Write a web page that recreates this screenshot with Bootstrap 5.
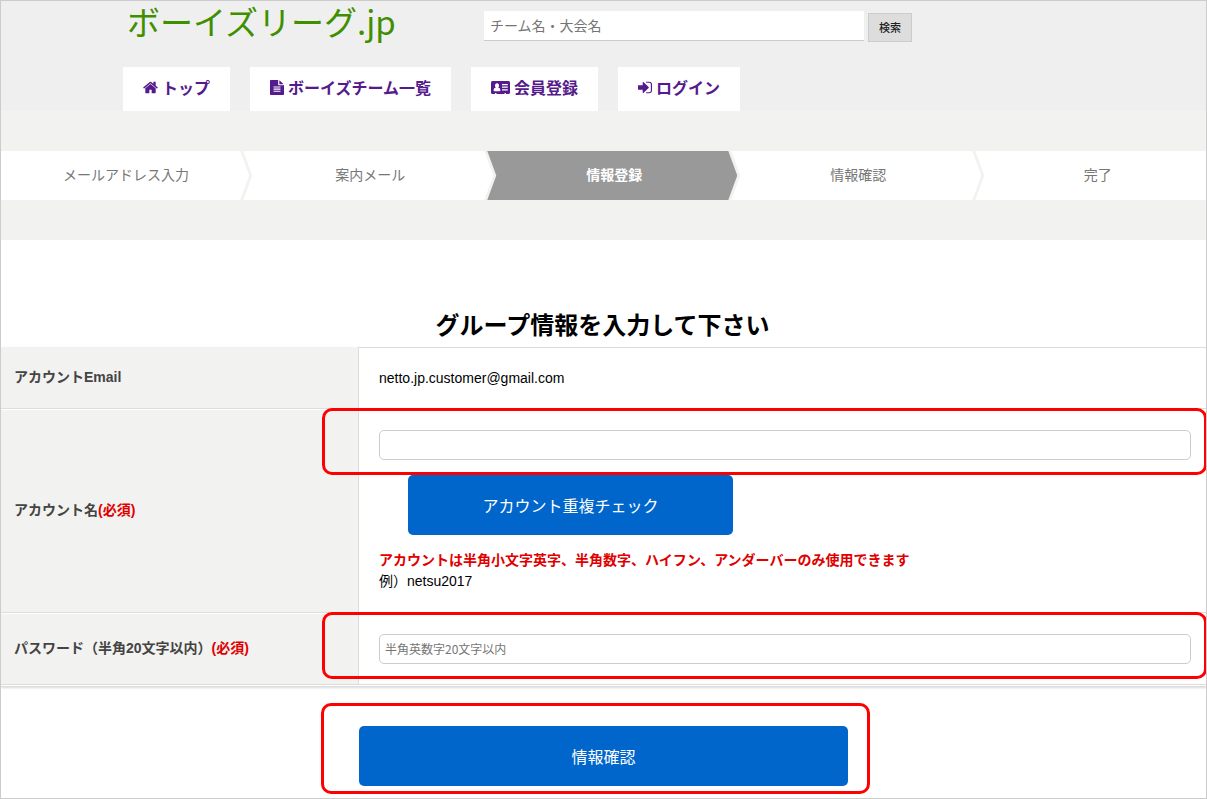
<!DOCTYPE html>
<html lang="ja">
<head>
<meta charset="utf-8">
<meta name="viewport" content="width=device-width, initial-scale=1">
<title>ボーイズリーグ.jp</title>
<link rel="stylesheet" href="https://cdn.jsdelivr.net/npm/bootstrap@5.3.0/dist/css/bootstrap.min.css">
<style>
  :root { --line: #ddd; --frame: #ccc; --pale: #f2f2f0; --alert: #e00000; --action: #0066cc; }
  body { font: 14px/20px "Liberation Sans", "Noto Sans CJK JP", sans-serif; color: #000; border: 1px solid var(--frame); }
  .site-header { background: #efefef; }
  .site-inner { max-width: 961px; }
  .topbar { height: 66px; }
  .brand { flex: 0 0 361px; padding-left: 4px; font: 33px/40px "Noto Sans CJK JP", sans-serif; color: #3f8f00; text-decoration: none; }
  .search-box { width: 380px; height: 30px; margin-top: 10px; padding: 0 6px 2px; border: 0; border-bottom: 1px solid var(--frame); border-radius: 0; font: 14px/20px "Noto Sans CJK JP", sans-serif; }
  .search-box::placeholder, .field::placeholder { color: #757575; }
  .search-btn { width: 44px; height: 29px; margin-top: 12px; padding: 0 0 2px; border: 1px solid var(--frame); border-radius: 0; background: #ddd; font: 500 11px/20px "Noto Sans CJK JP", sans-serif; color: #222; }
  .menu { gap: 20px; }
  .menu a { display: flex; align-items: center; gap: 4px; padding: 8px 20px 12px; background: #fff; color: #551a8b; font: bold 16px/24px "Noto Sans CJK JP", sans-serif; text-decoration: none; }
  .menu svg { height: 15px; fill: currentColor; }
  .progress-band { background: var(--pale); padding: 40px 0; }
  .step { flex: 0 0 auto; width: 20.75%; margin-left: -6px; padding-left: 4px; background: #fff; color: #777; text-align: center; line-height: 49px;
    clip-path: polygon(0 0, calc(100% - 9px) 0, 100% 50%, calc(100% - 9px) 100%, 0 100%, 9px 50%); }
  .step:first-child { width: 20.6%; margin-left: 0; padding-left: 2px; clip-path: polygon(0 0, calc(100% - 9px) 0, 100% 50%, calc(100% - 9px) 100%, 0 100%); }
  .step:last-child { flex: 1 1 0; width: auto; padding-left: 14px; clip-path: polygon(0 0, 100% 0, 100% 100%, 0 100%, 9px 50%); }
  .step.current { background: #999; color: #fff; font-weight: bold; }
  .page-title { margin: 0; padding: 66px 2px 5px 0; font: bold 24px/36px "Noto Sans CJK JP", sans-serif; }
  .entry { border-collapse: separate; border-spacing: 0; }
  .entry-wrap { padding-bottom: 1px; border-bottom: 1px solid var(--line); box-shadow: 0 1px 2px rgba(0,0,0,.15); }
  .entry th, .entry td { border-top: 1px solid #fff; border-bottom: 1px solid var(--line); }
  .entry th { width: 357px; padding: 0 13px 2px; background: var(--pale); color: #444; vertical-align: middle; }
  .entry td { position: relative; padding: 20px 15px 20px 20px; border-left: 1px solid var(--line); }
  .entry tr:first-child th { border-top-color: var(--pale); }
  .entry tr:first-child td { border-top-color: var(--line); }
  .required-mark, .rule { color: var(--alert); font-weight: bold; }
  .field { height: 30px; padding: 0 5px 2px; border: 1px solid var(--frame); border-radius: 5px; font: 12px/20px "Noto Sans CJK JP", sans-serif; }
  .action { height: 60px; border: 0; border-radius: 5px; background: var(--action); color: #fff; font: 16px/24px "Noto Sans CJK JP", sans-serif; }
  .check { width: 40%; margin: 15px 0 15px 29px; }
  .note { line-height: 21px; }
  .submit-area { width: 489px; max-width: 90%; margin: 39px auto 12px; position: relative; }
  /* red guide frames laid over the fields to fill in */
  .guide::after { content: ""; position: absolute; border: 3px solid #f00; border-radius: 10px; pointer-events: none; }
  td.guide::after { left: -37px; right: -1px; top: -2px; height: 67px; }
  .submit-area::after { inset: -23px -22px -8px -38px; }
</style>
</head>
<body>
<header class="site-header">
  <div class="site-inner mx-auto">
    <div class="topbar d-flex align-items-start">
      <a class="brand" href="#">ボーイズリーグ.jp</a>
      <form class="d-flex align-items-start gap-1">
        <input class="search-box form-control" type="search" aria-label="チーム名・大会名" placeholder="チーム名・大会名">
        <button class="search-btn btn" type="submit">検索</button>
      </form>
    </div>
    <nav class="menu d-flex flex-wrap">
      <a href="#"><svg width="15" viewBox="64 128 1664 1536" aria-hidden="true"><path d="M1472 992v480q0 26-19 45t-45 19h-384v-384h-256v384h-384q-26 0-45-19t-19-45v-480q0-1 .5-3t.5-3l575-474 575 474q1 2 1 6zm223-69l-62 74q-8 9-21 11h-3q-13 0-21-7l-692-577-692 577q-12 8-24 7-13-2-21-11l-62-74q-8-10-7-23.5t11-21.5l719-599q32-26 76-26t76 26l244 204v-195q0-14 9-23t23-9h192q14 0 23 9t9 23v408l219 182q10 8 11 21.5t-7 23.5z"/></svg>トップ</a>
      <a href="#"><svg width="14" viewBox="128 0 1536 1792" preserveAspectRatio="none" aria-hidden="true"><path d="M1596 476q14 14 28 36h-472v-472q22 14 36 28zm-476 164h544v1056q0 40-28 68t-68 28h-1344q-40 0-68-28t-28-68v-1600q0-40 28-68t68-28h800v544q0 40 28 68t68 28zm160 736v-64q0-14-9-23t-23-9h-704q-14 0-23 9t-9 23v64q0 14 9 23t23 9h704q14 0 23-9t9-23zm0-256v-64q0-14-9-23t-23-9h-704q-14 0-23 9t-9 23v64q0 14 9 23t23 9h704q14 0 23-9t9-23zm0-256v-64q0-14-9-23t-23-9h-704q-14 0-23 9t-9 23v64q0 14 9 23t23 9h704q14 0 23-9t9-23z"/></svg>ボーイズチーム一覧</a>
      <a href="#"><svg width="19" viewBox="0 0 19 15" aria-hidden="true"><path fill-rule="evenodd" d="M1.500 1h16q1.500 0 1.500 1.500v10q0 1.500-1.500 1.500H15v-1h-1.500v1h-8v-1H4v1H1.500Q0 14 0 12.500v-10Q0 1 1.500 1zM6 3.200c-1.300 0-2 1-2 2.300 0 .9.300 1.600.8 2.100C3.200 8 2.600 9.200 2.600 10.400q0 .8.800.8h5.200q.8 0 .8-.8C9.400 9.200 8.800 8 7.200 7.600 7.700 7.100 8 6.400 8 5.500 8 4.200 7.300 3.200 6 3.200zM11 4v1.200h5.800V4zM11 6.600v1.200h5.800V6.600zM11 9.200v1.200h5.800V9.200z"/></svg>会員登録</a>
      <a href="#"><svg width="14" viewBox="128 128 1536 1536" aria-hidden="true"><path d="M1312 896q0 26-19 45l-544 544q-19 19-45 19t-45-19-19-45v-288h-448q-26 0-45-19t-19-45v-384q0-26 19-45t45-19h448v-288q0-26 19-45t45-19 45 19l544 544q19 19 19 45zm352-352v704q0 119-84.500 203.500t-203.500 84.500h-320q-13 0-22.500-9.500t-9.500-22.500q0-4-1-20t-.5-26.500 3-23.500 10-19.500 20.500-6.500h320q66 0 113-47t47-113v-704q0-66-47-113t-113-47h-312l-11.500-1-11.500-3-8-5.500-7-9-2-13.500q0-4-1-20t-.5-26.500 3-23.500 10-19.500 20.500-6.500h320q119 0 203.500 84.500t84.500 203.500z"/></svg>ログイン</a>
    </nav>
  </div>
</header>

<div class="progress-band">
  <ol class="list-unstyled d-flex m-0 overflow-hidden">
    <li class="step">メールアドレス入力</li>
    <li class="step">案内メール</li>
    <li class="step current" aria-current="step">情報登録</li>
    <li class="step">情報確認</li>
    <li class="step">完了</li>
  </ol>
</div>

<main>
  <h1 class="page-title text-center">グループ情報を入力して下さい</h1>
  <form>
    <div class="entry-wrap">
      <table class="entry w-100">
        <tr>
          <th scope="row">アカウントEmail</th>
          <td>netto.jp.customer@gmail.com</td>
        </tr>
        <tr>
          <th scope="row"><label for="account">アカウント名<span class="required-mark">(必須)</span></label></th>
          <td class="guide">
            <input class="field form-control" id="account" type="text">
            <button class="action check btn d-block" type="button">アカウント重複チェック</button>
            <div class="note"><span class="rule">アカウントは半角小文字英字、半角数字、ハイフン、アンダーバーのみ使用できます</span><br>例）netsu2017</div>
          </td>
        </tr>
        <tr>
          <th scope="row"><label for="password">パスワード（半角20文字以内）<span class="required-mark">(必須)</span></label></th>
          <td class="guide"><input class="field form-control" id="password" type="password" placeholder="半角英数字20文字以内"></td>
        </tr>
      </table>
    </div>
    <div class="submit-area guide">
      <button class="action btn w-100" type="submit">情報確認</button>
    </div>
  </form>
</main>
<script src="https://cdn.jsdelivr.net/npm/bootstrap@5.3.0/dist/js/bootstrap.bundle.min.js"></script>
</body>
</html>
